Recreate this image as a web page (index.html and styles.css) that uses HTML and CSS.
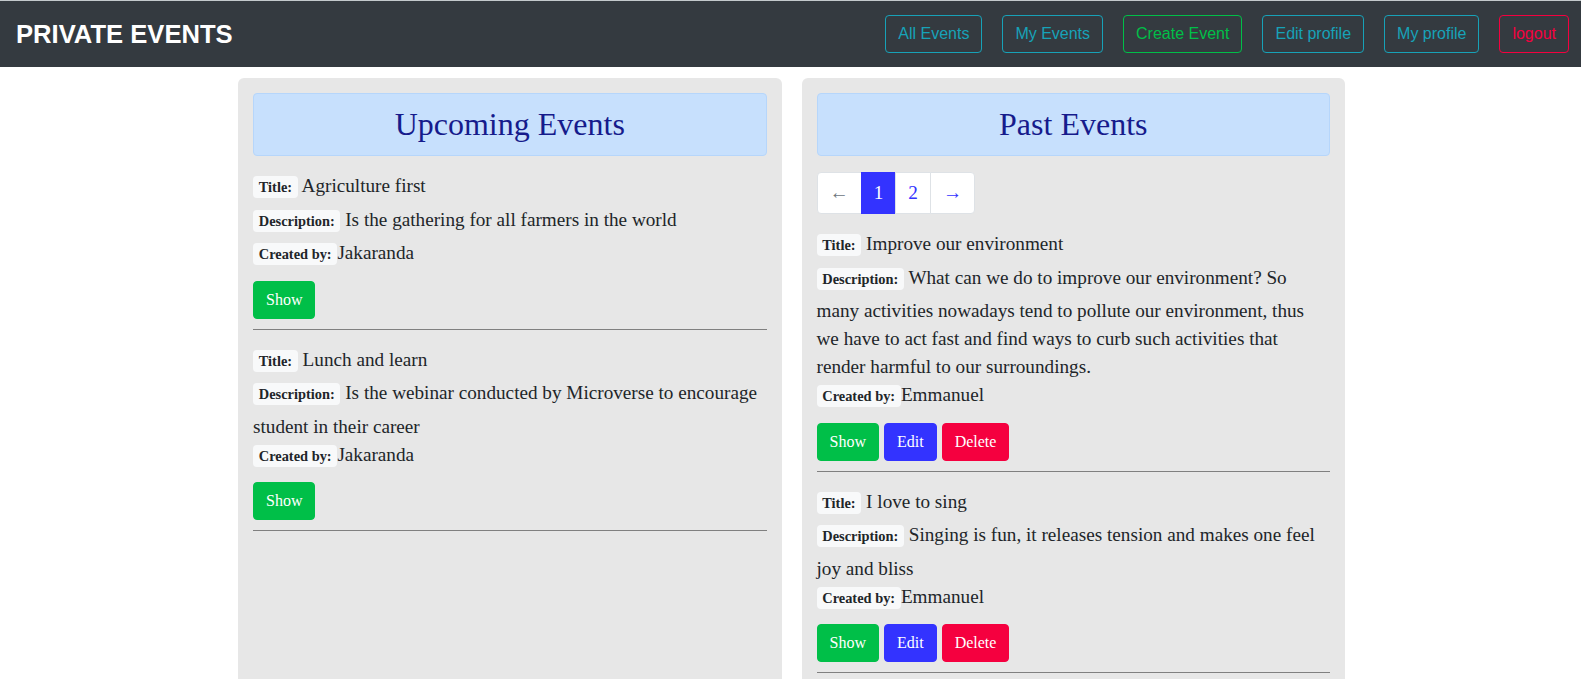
FILE: index.html
```html
<!DOCTYPE html>
<html lang="en">
<head>
<meta charset="utf-8">
<title>Private Events</title>
<link rel="stylesheet" href="styles.css">
</head>
<body>
<nav class="navbar">
  <a class="brand" href="#">PRIVATE EVENTS</a>
  <div class="nav-links">
    <a class="nav-btn info" href="#">All Events</a>
    <a class="nav-btn info" href="#">My Events</a>
    <a class="nav-btn success" href="#">Create Event</a>
    <a class="nav-btn info" href="#">Edit profile</a>
    <a class="nav-btn info" href="#">My profile</a>
    <a class="nav-btn danger" href="#">logout</a>
  </div>
</nav>

<main class="main">
  <section class="panel">
    <h2 class="panel-head">Upcoming Events</h2>

    <div class="event">
      <div class="field"><span class="badge">Title:</span> Agriculture first</div>
      <div class="field"><span class="badge">Description:</span> Is the gathering for all farmers in the world</div>
      <div class="field"><span class="badge">Created by:</span>Jakaranda</div>
      <div class="actions">
        <a class="btn show" href="#">Show</a>
      </div>
      <hr class="sep">
    </div>

    <div class="event">
      <div class="field"><span class="badge">Title:</span> Lunch and learn</div>
      <div class="field"><span class="badge">Description:</span> Is the webinar conducted by Microverse to encourage student in their career</div>
      <div class="field"><span class="badge">Created by:</span>Jakaranda</div>
      <div class="actions">
        <a class="btn show" href="#">Show</a>
      </div>
      <hr class="sep">
    </div>
  </section>

  <section class="panel">
    <h2 class="panel-head">Past Events</h2>

    <ul class="pagination">
      <li class="page disabled">&larr;</li>
      <li class="page active">1</li>
      <li class="page">2</li>
      <li class="page">&rarr;</li>
    </ul>

    <div class="event">
      <div class="field"><span class="badge">Title:</span> Improve our environment</div>
      <div class="field"><span class="badge">Description:</span> What can we do to improve our environment? So many activities nowadays tend to pollute our environment, thus we have to act fast and find ways to curb such activities that render harmful to our surroundings.</div>
      <div class="field"><span class="badge">Created by:</span>Emmanuel</div>
      <div class="actions">
        <a class="btn show" href="#">Show</a>
        <a class="btn edit" href="#">Edit</a>
        <a class="btn delete" href="#">Delete</a>
      </div>
      <hr class="sep">
    </div>

    <div class="event">
      <div class="field"><span class="badge">Title:</span> I love to sing</div>
      <div class="field"><span class="badge">Description:</span> Singing is fun, it releases tension and makes one feel joy and bliss</div>
      <div class="field"><span class="badge">Created by:</span>Emmanuel</div>
      <div class="actions">
        <a class="btn show" href="#">Show</a>
        <a class="btn edit" href="#">Edit</a>
        <a class="btn delete" href="#">Delete</a>
      </div>
      <hr class="sep">
    </div>
  </section>
</main>
</body>
</html>
```

FILE: styles.css
```css
* { box-sizing: border-box; }

body {
  margin: 0;
  background: #ffffff;
  color: #212529;
  font-family: "Liberation Serif", "Times New Roman", serif;
  font-size: 19.2px;
}

a { text-decoration: none; }

.navbar {
  height: 67px;
  border-top: 1px solid #c3c9cc;
  background: #343a40;
  display: flex;
  align-items: center;
  justify-content: space-between;
  padding: 0 12px 0 16px;
}

.brand {
  color: #ffffff;
  font-family: "Liberation Sans", Arial, sans-serif;
  font-weight: bold;
  font-size: 25.6px;
  line-height: 30px;
}

.nav-links {
  display: flex;
  gap: 20px;
}

.nav-btn {
  font-family: "Liberation Sans", Arial, sans-serif;
  font-size: 16px;
  line-height: 24px;
  padding: 6px 12px;
  border: 1px solid;
  border-radius: 4px;
}

.nav-btn.info { color: #17a2b8; border-color: #17a2b8; }
.nav-btn.success { color: #00bf48; border-color: #00bf48; }
.nav-btn.danger { color: #f5003f; border-color: #f5003f; }

.main {
  width: 1107px;
  margin: 11px 0 0 calc(50% - 552.5px);
  display: grid;
  grid-template-columns: 1fr 1fr;
  gap: 20px;
}

.panel {
  background: #e7e7e7;
  border-radius: 6px;
  padding: 15px 15px 20px;
}

.panel-head {
  margin: 0 0 16px;
  padding: 12px;
  background: #c7e0fd;
  border: 1px solid #b6d6fb;
  border-radius: 4px;
  color: #161b8c;
  font-weight: normal;
  font-size: 32px;
  line-height: 37px;
  text-align: center;
}

.pagination {
  list-style: none;
  margin: 0 0 16px;
  padding: 0;
  display: flex;
}

.page {
  padding: 8px 12px;
  line-height: 24px;
  background: #ffffff;
  border: 1px solid #dee2e6;
  margin-left: -1px;
  color: #3333ff;
}

.page:first-child {
  margin-left: 0;
  border-radius: 4px 0 0 4px;
}

.page:last-child { border-radius: 0 4px 4px 0; }

.page.disabled { color: #6c757d; }

.page.active {
  background: #3333ff;
  border-color: #3333ff;
  color: #ffffff;
}

.field {
  line-height: 28px;
}

.badge {
  display: inline-block;
  font-size: 14.4px;
  font-weight: bold;
  line-height: 1;
  padding: 3.6px 5.76px;
  margin-bottom: 7.5px;
  background: #f8f9fa;
  border-radius: 4px;
  color: #212529;
}

.actions {
  margin-top: 8px;
  display: flex;
  gap: 5px;
}

.btn {
  display: inline-block;
  font-size: 16px;
  line-height: 24px;
  padding: 6px 12px;
  border: 1px solid;
  border-radius: 4px;
  color: #ffffff;
}

.btn.show { background: #00bf48; border-color: #00bf48; }
.btn.edit { background: #3333ff; border-color: #3333ff; }
.btn.delete { background: #f5003f; border-color: #f5003f; }

.sep {
  margin: 10px 0 16px;
  border: 0;
  border-top: 1px solid #808080;
  height: 0;
}
```
